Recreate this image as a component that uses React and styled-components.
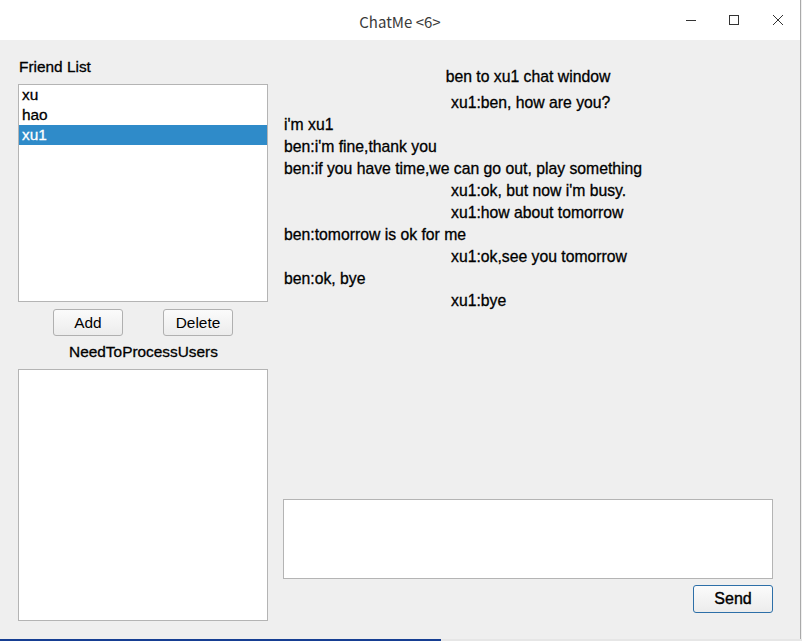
import React from 'react';
import styled, { createGlobalStyle } from 'styled-components';

const friends = ['xu', 'hao', 'xu1'];

const messages = [
  { from: 'xu1', text: 'xu1:ben, how are you?' },
  { from: 'ben', text: "i'm xu1" },
  { from: 'ben', text: "ben:i'm fine,thank you" },
  { from: 'ben', text: 'ben:if you have time,we can go out, play something' },
  { from: 'xu1', text: "xu1:ok, but now i'm busy." },
  { from: 'xu1', text: 'xu1:how about tomorrow' },
  { from: 'ben', text: 'ben:tomorrow is ok for me' },
  { from: 'xu1', text: 'xu1:ok,see you tomorrow' },
  { from: 'ben', text: 'ben:ok, bye' },
  { from: 'xu1', text: 'xu1:bye' },
];

const App = () => {
  return (
    <>
      <GlobalStyle />
      <Screen>
        <Window>
          <TitleBar>
            <Title>ChatMe &lt;6&gt;</Title>
            <Controls>
              <ControlButton>
                <svg width="12" height="12" viewBox="0 0 12 12">
                  <line x1="1" y1="6.5" x2="11" y2="6.5" stroke="#333" strokeWidth="1" />
                </svg>
              </ControlButton>
              <ControlButton>
                <svg width="12" height="12" viewBox="0 0 12 12">
                  <rect x="1.5" y="1.5" width="9" height="9" fill="none" stroke="#333" strokeWidth="1" />
                </svg>
              </ControlButton>
              <ControlButton>
                <svg width="12" height="12" viewBox="0 0 12 12">
                  <path d="M1 1 L11 11 M11 1 L1 11" stroke="#333" strokeWidth="1" />
                </svg>
              </ControlButton>
            </Controls>
          </TitleBar>
          <Body>
            <LeftPanel>
              <Label>Friend List</Label>
              <ListBox height={218}>
                {friends.map((f) => (
                  <ListItem key={f} selected={f === 'xu1'}>
                    {f}
                  </ListItem>
                ))}
              </ListBox>
              <ButtonRow>
                <PushButton>Add</PushButton>
                <PushButton>Delete</PushButton>
              </ButtonRow>
              <CenterLabel>NeedToProcessUsers</CenterLabel>
              <ListBox height={252} />
            </LeftPanel>
            <RightPanel>
              <ChatTitle>ben to xu1 chat window</ChatTitle>
              <MessageArea>
                {messages.map((m, i) => (
                  <Message key={i} incoming={m.from === 'xu1'}>
                    {m.text}
                  </Message>
                ))}
              </MessageArea>
              <InputBox />
              <SendRow>
                <SendButton>Send</SendButton>
              </SendRow>
            </RightPanel>
          </Body>
        </Window>
        <TaskStrip>
          <Progress />
        </TaskStrip>
      </Screen>
    </>
  );
};

export default App;

const GlobalStyle = createGlobalStyle`
  html, body {
    margin: 0;
    padding: 0;
    background: #efefef;
  }
  body {
    font-family: 'Liberation Sans', Arial, sans-serif;
    width: 802px;
    height: 641px;
    overflow: hidden;
  }
`;

const Screen = styled.div`
  width: 802px;
  height: 641px;
  display: flex;
  flex-direction: column;
  background: #efefef;
`;

const Window = styled.div`
  width: 800px;
  height: 639px;
  border-right: 1px solid #a9a9a9;
  display: flex;
  flex-direction: column;
  background: #efefef;
`;

const TitleBar = styled.div`
  height: 40px;
  background: #ffffff;
  position: relative;
  display: flex;
  align-items: center;
  justify-content: center;
`;

const Title = styled.div`
  font-family: 'Noto Sans CJK SC', 'Noto Sans', sans-serif;
  font-size: 15px;
  color: #3a3a3a;
  margin-top: 2px;
`;

const Controls = styled.div`
  position: absolute;
  right: 0;
  top: 0;
  height: 40px;
  display: flex;
`;

const ControlButton = styled.div`
  width: 42px;
  height: 40px;
  display: flex;
  align-items: center;
  justify-content: center;
  margin-right: 1px;
  &:last-child {
    width: 44px;
    margin-right: 0;
  }
`;

const Body = styled.div`
  flex: 1;
  display: flex;
  padding: 18px 0 17px 18px;
`;

const LeftPanel = styled.div`
  width: 250px;
  display: flex;
  flex-direction: column;
`;

const Label = styled.div`
  font-size: 15.4px;
  line-height: 18px;
  color: #000;
  padding-left: 1px;
  margin-bottom: 8px;
  -webkit-text-stroke: 0.3px #000;
`;

const CenterLabel = styled(Label)`
  text-align: center;
  margin: 7px 0 8px;
`;

const ListBox = styled.div`
  height: ${({ height }) => height}px;
  box-sizing: border-box;
  background: #fff;
  border: 1px solid #b4b4b4;
`;

const ListItem = styled.div`
  height: 20px;
  line-height: 20px;
  font-size: 15.4px;
  padding-left: 3px;
  color: ${({ selected }) => (selected ? '#fff' : '#000')};
  background: ${({ selected }) => (selected ? '#2f8bc9' : 'transparent')};
  -webkit-text-stroke: 0.3px ${({ selected }) => (selected ? '#fff' : '#000')};
`;

const ButtonRow = styled.div`
  display: flex;
  justify-content: center;
  gap: 40px;
  margin-top: 7px;
`;

const PushButton = styled.div`
  width: 70px;
  height: 27px;
  box-sizing: border-box;
  border: 1px solid #b0b0b0;
  border-radius: 3px;
  background: linear-gradient(#fbfbfb, #ececec);
  font-size: 15.4px;
  display: flex;
  align-items: center;
  justify-content: center;
  color: #000;
`;

const RightPanel = styled.div`
  width: 490px;
  margin-left: 15px;
  display: flex;
  flex-direction: column;
`;

const ChatTitle = styled.div`
  font-size: 15.75px;
  line-height: 18px;
  margin-top: 10px;
  text-align: center;
  -webkit-text-stroke: 0.3px #000;
`;

const MessageArea = styled.div`
  flex: 1;
  display: flex;
  flex-direction: column;
  padding-top: 6px;
`;

const Message = styled.div`
  font-size: 15.75px;
  line-height: 22px;
  padding-left: ${({ incoming }) => (incoming ? '168px' : '1px')};
  white-space: nowrap;
  color: #000;
  -webkit-text-stroke: 0.3px #000;
`;

const InputBox = styled.div`
  height: 80px;
  box-sizing: border-box;
  background: #fff;
  border: 1px solid #b4b4b4;
`;

const SendRow = styled.div`
  display: flex;
  justify-content: flex-end;
  margin: 6px 0 9px;
`;

const SendButton = styled.div`
  width: 80px;
  height: 28px;
  box-sizing: border-box;
  border: 1px solid #2d6fa8;
  border-radius: 3px;
  background: linear-gradient(#fbfbfb, #ececec);
  font-size: 16px;
  display: flex;
  align-items: center;
  justify-content: center;
  color: #000;
  -webkit-text-stroke: 0.4px #000;
`;

const TaskStrip = styled.div`
  height: 2px;
  background: #e6e6e6;
`;

const Progress = styled.div`
  width: 441px;
  height: 2px;
  background: #163e92;
`;
